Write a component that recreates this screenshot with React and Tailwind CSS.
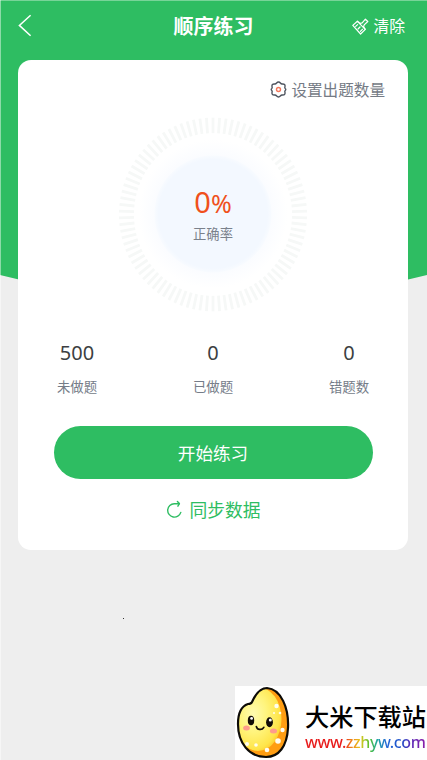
import React from 'react';

const TICKS = Array.from({ length: 90 }, (_, i) => i * 4);

const STATS = [
  { value: '500', label: '未做题' },
  { value: '0', label: '已做题' },
  { value: '0', label: '错题数' },
];

const BrushIcon = () => (
  <svg className="h-[17px] w-[17px]" viewBox="0 0 17 17" fill="none" stroke="white" strokeWidth="1.2" strokeLinejoin="round" strokeLinecap="round">
    <path d="M0.8 7.4 L5.4 3.2 L8.2 5.4 L10.2 4.9 L13.4 1.2 L15.8 3.5 L12.2 6.9 L11.6 8.8 L13.3 11.4 L8.6 16 Z" />
    <path d="M5.4 3.4 L13 11.2 M3.7 8.4 L5.6 6.6 M6 11 L8 9 M8.4 13.4 L10.4 11.3" />
  </svg>
);

const GearIcon = () => (
  <svg className="h-[17px] w-[17px]" viewBox="0 0 17 17" fill="none">
    <path
      d="M6.4 2.2 Q8.5 -0.2 10.6 2.2 Q11.2 3.2 12.4 3 Q15.4 2.8 15 5.6 Q14.5 6.8 15.2 7.5 Q16.4 8.5 15.2 9.5 Q14.5 10.2 15 11.4 Q15.4 14.2 12.4 14 Q11.2 13.8 10.6 14.8 Q8.5 17.2 6.4 14.8 Q5.8 13.8 4.6 14 Q1.6 14.2 2 11.4 Q2.5 10.2 1.8 9.5 Q0.6 8.5 1.8 7.5 Q2.5 6.8 2 5.6 Q1.6 2.8 4.6 3 Q5.8 3.2 6.4 2.2 Z"
      stroke="#4d535e"
      strokeWidth="1.4"
    />
    <circle cx="8.5" cy="8.5" r="2" stroke="#f4785c" strokeWidth="1.4" />
  </svg>
);

const SyncIcon = () => (
  <svg className="h-[18px] w-[18px]" viewBox="0 0 18 18" fill="none" stroke="#2ebd62" strokeWidth="1.4" strokeLinecap="round" strokeLinejoin="round">
    <path d="M14.2 3.7 H9.2 A6.7 6.7 0 1 0 15.8 12.4" />
    <path d="M12.4 1.5 L14.4 3.6 L12.9 6.2" />
  </svg>
);

const Dial = () => (
  <div className="grid h-[196px] w-[196px] place-items-center">
    <svg className="col-start-1 row-start-1 h-[196px] w-[196px]" viewBox="0 0 196 196">
      <defs>
        <radialGradient id="halo">
          <stop offset="0.7" stopColor="#f9fbff" />
          <stop offset="0.98" stopColor="#ffffff" />
        </radialGradient>
        <radialGradient id="core">
          <stop offset="0.93" stopColor="#f3f8ff" />
          <stop offset="1" stopColor="#f8fbff" />
        </radialGradient>
      </defs>
      <g transform="translate(98 98.5) scale(1 1.03)">
        {TICKS.map((deg) => (
          <line key={deg} x1="0" y1="-94" x2="0" y2="-79" stroke="#f6f8f7" strokeWidth="2.8" transform={`rotate(${deg})`} />
        ))}
      </g>
      <circle cx="98" cy="98" r="76" fill="url(#halo)" />
      <circle cx="98" cy="98" r="58.5" fill="url(#core)" />
    </svg>
    <div className="col-start-1 row-start-1 flex flex-col items-center">
      <div className="flex items-baseline font-['Noto_Sans','Noto_Sans_CJK_SC',sans-serif] leading-[34px] text-[#f0501c]">
        <span className="text-[29px]">0</span>
        <span className="text-[25px]">%</span>
      </div>
      <span className="mt-[4px] text-[13.3px] leading-[20px] text-[#7a818c]">正确率</span>
    </div>
  </div>
);

const RiceMascot = () => (
  <svg className="h-[74px] w-[56px] shrink-0" viewBox="0 0 56 74">
    <defs>
      <radialGradient id="grain" cx="0.4" cy="0.42" r="0.65">
        <stop offset="0" stopColor="#fffbb0" />
        <stop offset="0.45" stopColor="#fff47c" />
        <stop offset="0.85" stopColor="#ffe54a" />
        <stop offset="1" stopColor="#ffc92a" />
      </radialGradient>
      <clipPath id="grainShape">
        <path d="M17 16 C21 7 26 2 32 2 C46 3 54 22 53 42 C52 60 44 71 31 71 C14 71 3 57 3 38 C3 27 7 20 13 18 Z" />
      </clipPath>
    </defs>
    <g clipPath="url(#grainShape)">
      <rect width="56" height="74" fill="#ff9d12" />
      <ellipse cx="23" cy="33" rx="23.5" ry="32" fill="url(#grain)" />
      <g fill="#fffdf0">
        <circle cx="41.5" cy="20" r="2.2" />
        <circle cx="45" cy="27" r="1.3" />
        <circle cx="47.5" cy="44" r="2.2" />
        <circle cx="43" cy="55" r="2.8" />
        <circle cx="32" cy="64" r="2.3" />
        <circle cx="21" cy="59" r="1.8" />
        <circle cx="12" cy="58" r="2" />
        <circle cx="39" cy="27" r="1" />
      </g>
    </g>
    <path d="M17 16 C21 7 26 2 32 2 C46 3 54 22 53 42 C52 60 44 71 31 71 C14 71 3 57 3 38 C3 27 7 20 13 18 Q16 18 17 16 Z" fill="none" stroke="#0d0b07" strokeWidth="2.2" strokeLinejoin="round" />
    <ellipse cx="16" cy="34.5" rx="3.2" ry="4.8" fill="#120c08" />
    <ellipse cx="34.5" cy="36.3" rx="3.4" ry="5" fill="#120c08" />
    <circle cx="16.6" cy="32.4" r="1.4" fill="white" />
    <circle cx="35.3" cy="34.1" r="1.5" fill="white" />
    <path d="M21.3 40.5 Q22.3 43.8 25 43.4 Q27.5 43.6 28.8 41.3" fill="none" stroke="#120c08" strokeWidth="1.7" strokeLinecap="round" />
    <ellipse cx="11.5" cy="42" rx="3.4" ry="2.5" fill="#ff9c8b" />
    <ellipse cx="38.5" cy="45" rx="3.6" ry="2.5" fill="#ff9c8b" />
  </svg>
);

export default function App() {
  return (
    <div className="relative h-[760px] w-[427px] overflow-hidden bg-[#eeeeee] font-['Noto_Sans_CJK_SC',sans-serif]">
      {/* green backdrop with a shallow point at the bottom */}
      <div className="absolute inset-x-0 top-0 h-[330px] bg-[#2ebd62] [clip-path:polygon(0_0,100%_0,100%_275px,50%_326px,0_275px)]" />
      <div className="absolute inset-x-0 top-0 h-px bg-white/35" />
      <div className="absolute inset-y-0 left-0 w-px bg-white/45" />

      <div className="relative flex flex-col">
        <header className="grid h-[60px] grid-cols-[1fr_auto_1fr] items-center pr-[22px] pb-[8px] pl-[18px]">
          <svg className="h-[24px] w-[14px]" viewBox="0 0 14 24" fill="none" stroke="white" strokeWidth="1.5">
            <path d="M12.6 1.2 L1.4 11.4 L12.6 21.8" />
          </svg>
          <h1 className="ml-[4px] text-[20px] leading-[28px] font-bold text-white">顺序练习</h1>
          <button className="flex items-center gap-[4px] justify-self-end text-[15.8px] leading-[22px] text-white">
            <BrushIcon />
            清除
          </button>
        </header>

        <main className="mx-[18px] flex h-[490px] w-[390px] flex-col items-center rounded-[13px] bg-white">
          <button className="mt-[18px] mr-[23px] flex items-center gap-[4px] self-end text-[15.6px] leading-[23px] text-[#757b85]">
            <GearIcon />
            设置出题数量
          </button>

          <div className="mt-[15px]">
            <Dial />
          </div>

          <div className="mt-[26px] grid w-[408px] grid-cols-3">
            {STATS.map((stat) => (
              <div key={stat.label} className="flex flex-col items-center">
                <span className="font-['Noto_Sans',sans-serif] text-[20px] leading-[30px] text-[#3c3f42]">{stat.value}</span>
                <span className="mt-[8px] text-[13.4px] leading-[20px] text-[#757c88]">{stat.label}</span>
              </div>
            ))}
          </div>

          <button className="mt-[30px] h-[53px] w-[319px] rounded-full bg-[#2ebd62] text-[17.6px] leading-[52px] text-white">
            开始练习
          </button>

          <button className="mt-[17px] flex items-center gap-[6px] text-[17.8px] leading-[26px] text-[#2ebd62]">
            <SyncIcon />
            同步数据
          </button>
        </main>
      </div>

      <div className="absolute top-[618px] left-[123px] h-px w-px bg-[#333333]" />

      {/* site badge */}
      <div className="absolute top-[686px] left-[235px] flex h-[74px] w-[192px] items-start bg-white">
        <RiceMascot />
        <div className="ml-[14px] flex flex-col items-start pt-[14px] whitespace-nowrap">
          <span className="text-[24.2px] leading-[32px] font-medium text-black">大米下载站</span>
          <span className="bg-[linear-gradient(90deg,#e81c1c_0%,#e81c1c_32%,#f07818_38%,#e8c81e_46%,#4fbf2f_54%,#20a8a0_60%,#2468d8_68%,#1d50c8_80%,#5a2cb8_88%,#8a1fa8_100%)] bg-clip-text font-['Noto_Sans',sans-serif] text-[16px] leading-[20px] font-medium tracking-[-0.4px] text-transparent">
            www.zzhyw.com
          </span>
        </div>
      </div>
    </div>
  );
}
